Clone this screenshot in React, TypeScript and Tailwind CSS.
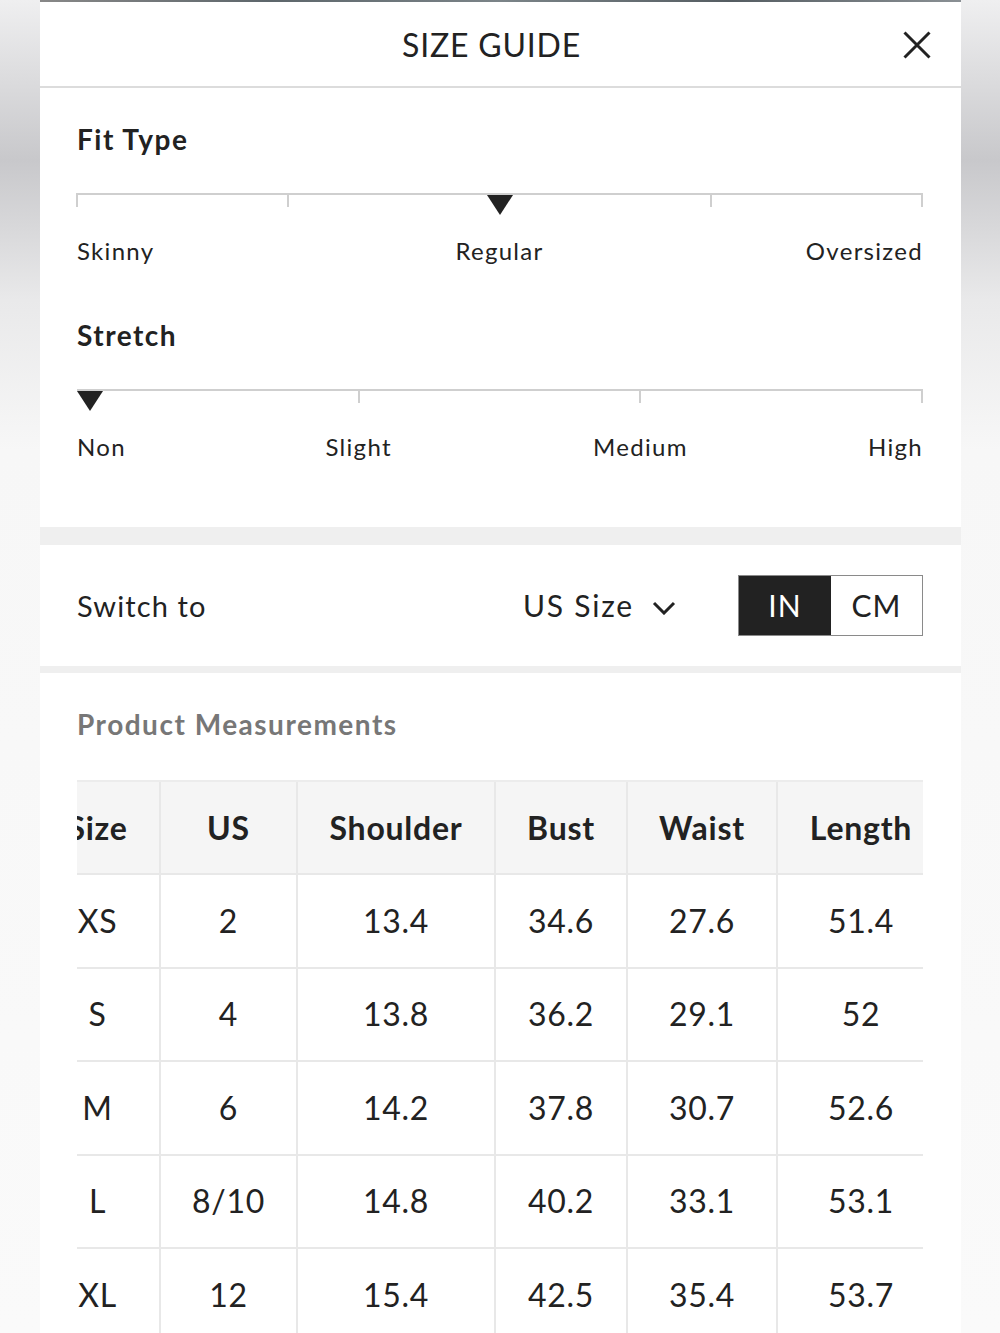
import React from "react";

const rows = [
  ["XS", "2", "13.4", "34.6", "27.6", "51.4"],
  ["S", "4", "13.8", "36.2", "29.1", "52"],
  ["M", "6", "14.2", "37.8", "30.7", "52.6"],
  ["L", "8/10", "14.8", "40.2", "33.1", "53.1"],
  ["XL", "12", "15.4", "42.5", "35.4", "53.7"],
];

const heads = ["Size", "US", "Shoulder", "Bust", "Waist", "Length"];

const cols = "grid grid-cols-[125px_137px_198px_132px_150px_166px]";

const Triangle = () => (
  <svg width="26" height="20" viewBox="0 0 26 20" className="block">
    <path d="M0 0 H26 L13 20 Z" fill="#222" />
  </svg>
);

// track with ticks at given percentages, marker at a percentage
const Scale = ({ ticks, marker }: { ticks: number[]; marker: "center" | "start" }) => (
  <div className="relative h-[43px]">
    <div className="h-[2px] bg-[#cfcfcf]" />
    {ticks.map((t) => (
      <div
        key={t}
        className="absolute top-0 h-[14px] w-[2px] -ml-[1px] bg-[#cfcfcf]"
        style={{ left: `${t}%` }}
      />
    ))}
    {marker === "center" ? (
      <div className="absolute left-1/2 top-[2px] -translate-x-1/2">
        <Triangle />
      </div>
    ) : (
      <div className="absolute left-0 top-[2px]">
        <Triangle />
      </div>
    )}
  </div>
);

export default function App() {
  return (
    <div className="min-h-[1333px] w-full bg-[linear-gradient(to_bottom,#efeff0_0px,#c8c8cb_160px,#e9e9ea_300px,#f7f7f7_450px,#fafafa_1333px)] font-[Lato,sans-serif] text-[#222]">
      <div className="ml-[40px] w-[921px] bg-white">
        <div className="h-[2px] bg-[linear-gradient(to_right,#888,#5d666b,#7b8488,#555d62,#8a9094)]" />
        {/* header */}
        <div className="relative flex h-[86px] items-center border-b-2 border-[#dcdcdc]">
          <div className="flex-1 pr-[18px] pt-[2px] text-center text-[32px] leading-[40px] tracking-[0.8px]">
            SIZE GUIDE
          </div>
          <button className="absolute right-[30px] top-[29px]">
            <svg width="28" height="28" viewBox="0 0 28 28" className="block">
              <path d="M1.5 1.5 L26.5 26.5 M26.5 1.5 L1.5 26.5" stroke="#222" strokeWidth="3" />
            </svg>
          </button>
        </div>

        {/* fit + stretch */}
        <div className="pl-[37px] pr-[39px] pb-[65px]">
          <div className="mt-[35px] text-[28px] font-bold leading-[32px] tracking-[1.5px]">Fit Type</div>
          <div className="mt-[38px]">
            <Scale ticks={[0, 25, 75, 100]} marker="center" />
          </div>
          <div className="grid grid-cols-3 text-[24px] leading-[30px] tracking-[1.3px]">
            <span className="text-left">Skinny</span>
            <span className="text-center">Regular</span>
            <span className="-mr-[1px] text-right">Oversized</span>
          </div>

          <div className="mt-[53px] text-[28px] font-bold leading-[32px] tracking-[1.5px]">Stretch</div>
          <div className="mt-[38px]">
            <Scale ticks={[33.33, 66.67, 100]} marker="start" />
          </div>
          <div className="grid grid-cols-6 text-[24px] leading-[30px] tracking-[1.3px]">
            <span className="text-left">Non</span>
            <span className="col-span-2 text-center">Slight</span>
            <span className="col-span-2 text-center">Medium</span>
            <span className="-mr-[1px] text-right">High</span>
          </div>
        </div>

        <div className="h-[18px] bg-[#efefef]" />

        {/* switch row */}
        <div className="flex h-[121px] items-center pl-[37px] pr-[38px]">
          <div className="flex-1 text-[29px] tracking-[1.1px]">Switch to</div>
          <div className="flex items-center gap-[18px] text-[30px] tracking-[1.8px]">
            <span>US Size</span>
            <svg width="24" height="14" viewBox="0 0 24 14" className="mt-[4px] block">
              <path d="M2 2 L12 12 L22 2" fill="none" stroke="#222" strokeWidth="3" />
            </svg>
          </div>
          <div className="ml-[62px] flex h-[61px] w-[185px] border border-[#8a8a8a] text-[30px] tracking-[1px]">
            <div className="flex w-[92px] items-center justify-center bg-[#222] text-white">IN</div>
            <div className="flex flex-1 items-center justify-center">CM</div>
          </div>
        </div>

        <div className="h-[7px] bg-[#efefef]" />

        {/* measurements */}
        <div className="pl-[37px] pr-[38px]">
          <div className="mt-[34px] text-[28px] font-bold leading-[34px] tracking-[1.5px] text-[#777]">
            Product Measurements
          </div>
          <div className="mt-[39px] w-[846px] overflow-hidden">
            <div className="-ml-[41px] w-[908px] border-t-2 border-[#ececec]">
              <div className={`${cols} h-[93px] border-b-2 border-[#e8e8e8] bg-[#f5f5f5] text-[32px] font-bold tracking-[0.75px]`}>
                {heads.map((h, i) => (
                  <div
                    key={h}
                    className={`flex items-center justify-center ${i < 5 ? "border-r-2 border-[#e8e8e8]" : ""}`}
                  >
                    {h}
                  </div>
                ))}
              </div>
              {rows.map((r) => (
                <div key={r[0]} className={`${cols} h-[93.5px] border-b-2 border-[#e8e8e8] text-[32px] tracking-[0.7px]`}>
                  {r.map((c, i) => (
                    <div
                      key={i}
                      className={`flex items-center justify-center ${i < 5 ? "border-r-2 border-[#e8e8e8]" : ""}`}
                    >
                      {c}
                    </div>
                  ))}
                </div>
              ))}
            </div>
          </div>
        </div>
      </div>
    </div>
  );
}
